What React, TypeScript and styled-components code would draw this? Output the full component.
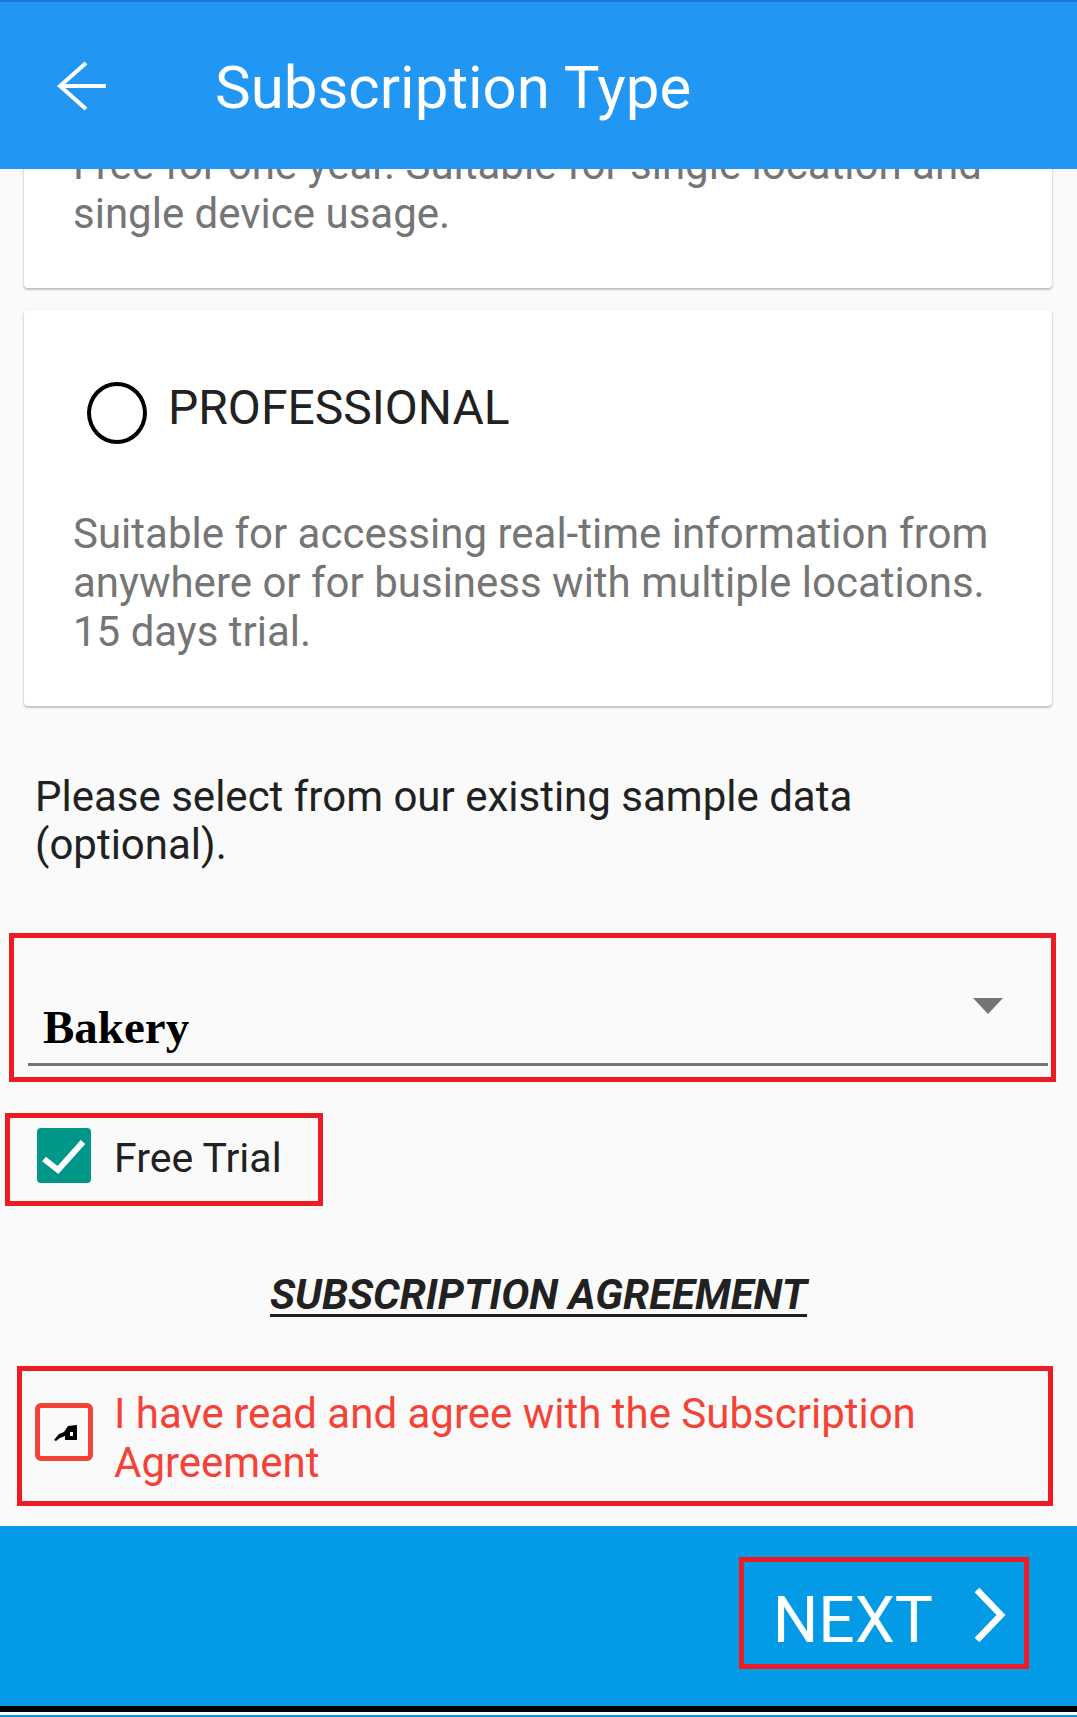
import { createGlobalStyle, styled } from "styled-components";

const GlobalStyle = createGlobalStyle`
  html, body {
    margin: 0;
    padding: 0;
    background: #fafafa;
  }
  body {
    font-family: Roboto, "Noto Sans", Arial, sans-serif;
  }
`;

// the first plan is scrolled up under the app bar, only its text tail shows
const plans: { title?: string; text: string }[] = [
  {
    text: "Free for one year. Suitable for single location and single device usage.",
  },
  {
    title: "PROFESSIONAL",
    text: "Suitable for accessing real-time information from anywhere or for business with multiple locations. 15 days trial.",
  },
];

const App = () => {
  return (
    <Page>
      <GlobalStyle />
      <Header>
        <BackButton>
          <svg width="50" height="50" viewBox="0 0 50 50">
            <path
              d="M29 2 L3 25 L29 48 M3 25 H49"
              fill="none"
              stroke="#fff"
              strokeWidth="4"
              strokeLinejoin="miter"
            />
          </svg>
        </BackButton>
        <Title>Subscription Type</Title>
      </Header>

      <Viewport>
        <Scroller>
          {plans.map((p, i) => (
            <Card key={i} $first={i === 0}>
              {p.title && (
                <PlanRow>
                  <Radio />
                  <PlanName>{p.title}</PlanName>
                </PlanRow>
              )}
              <PlanText $spaced={!!p.title}>{p.text}</PlanText>
            </Card>
          ))}

          <Prompt>Please select from our existing sample data (optional).</Prompt>

          <DropdownMark>
            <Field>
              <FieldValue>Bakery</FieldValue>
              <Caret>
                <svg width="30" height="16" viewBox="0 0 30 16">
                  <path d="M0 0 H30 L15 16 Z" fill="#757575" />
                </svg>
              </Caret>
            </Field>
          </DropdownMark>

          <TrialMark>
            <CheckBox>
              <svg width="54" height="55" viewBox="0 0 54 55">
                <path
                  d="M7 31 L21 42 L46 14"
                  fill="none"
                  stroke="#fff"
                  strokeWidth="6"
                />
              </svg>
            </CheckBox>
            <TrialLabel>Free Trial</TrialLabel>
          </TrialMark>

          <AgreementTitle>SUBSCRIPTION AGREEMENT</AgreementTitle>

          <AgreeMark>
            <OutlineBox>
              <svg width="48" height="48" viewBox="0 0 48 48">
                <path
                  d="M14 32 L19 26 L24 24 L28 18 L37 17 L37 32 L25 32 L25 28 L20 30 L16 33 Z"
                  fill="#000"
                />
                <rect x="30" y="24" width="3" height="4" fill="#fff" />
              </svg>
            </OutlineBox>
            <AgreeText>I have read and agree with the Subscription Agreement</AgreeText>
          </AgreeMark>
        </Scroller>
      </Viewport>

      <BottomBar>
        <NextMark>
          <NextLabel>NEXT</NextLabel>
          <Chevron>
            <svg width="34" height="54" viewBox="0 0 34 54">
              <path
                d="M5 2 L29 27 L5 52"
                fill="none"
                stroke="#fff"
                strokeWidth="6.5"
              />
            </svg>
          </Chevron>
        </NextMark>
      </BottomBar>
      <BlackEdge />
      <WhiteEdge />
      <NextScreenEdge />
    </Page>
  );
};

export default App;

const Page = styled.div`
  width: 1077px;
  height: 1717px;
  overflow: hidden;
  display: flex;
  flex-direction: column;
  background: #fafafa;
`;

const Header = styled.header`
  flex: none;
  box-sizing: border-box;
  height: 169px;
  border-top: 2px solid #1976d2;
  background: #2196f3;
  display: flex;
  align-items: center;
`;

const BackButton = styled.div`
  width: 50px;
  height: 50px;
  margin-left: 57px;
  display: flex;
`;

const Title = styled.h1`
  margin: 4px 0 0 108px;
  font-size: 60px;
  font-weight: 400;
  line-height: 72px;
  color: #fff;
`;

const Viewport = styled.div`
  flex: none;
  height: 1357px;
  overflow: hidden;
`;

const Scroller = styled.div`
  display: flex;
  flex-direction: column;
`;

const Card = styled.div<{ $first?: boolean }>`
  margin: ${(p) => (p.$first ? "-99px" : "22px")} 25px 0 24px;
  padding: 70px 49px 50px 49px;
  background: #fff;
  border-radius: 4px;
  box-shadow: 0 1px 3px rgba(0, 0, 0, 0.2), 0 2px 2px rgba(0, 0, 0, 0.12);
`;

const PlanRow = styled.div`
  display: flex;
  align-items: flex-start;
  padding-left: 14px;
`;

const Radio = styled.span`
  box-sizing: border-box;
  width: 60px;
  height: 62px;
  margin-top: 2px;
  border: 4px solid #000;
  border-radius: 50%;
`;

const PlanName = styled.div`
  margin-left: 21px;
  font-size: 48px;
  line-height: 56px;
  color: #212121;
`;

const PlanText = styled.p<{ $spaced?: boolean }>`
  margin: ${(p) => (p.$spaced ? "65px" : "0")} 0 0;
  font-size: 42px;
  line-height: 49px;
  color: #757575;
`;

const Prompt = styled.p`
  margin: 67px 0 0;
  padding: 0 35px;
  font-size: 42px;
  line-height: 48px;
  color: #212121;
`;

const Mark = styled.div`
  box-sizing: border-box;
  border: 5px solid #ed1c24;
`;

const DropdownMark = styled(Mark)`
  margin: 64px 21px 0 9px;
  padding-bottom: 11px;
`;

const Field = styled.div`
  margin: 0 3px 0 14px;
  padding: 62px 45px 9px 15px;
  border-bottom: 3px solid #757575;
  display: flex;
  align-items: flex-start;
`;

const FieldValue = styled.div`
  flex: 1;
  font-family: "Liberation Serif", "Times New Roman", serif;
  font-weight: 700;
  font-size: 47px;
  line-height: 54px;
  color: #000;
`;

const Caret = styled.div`
  margin-top: -2px;
  display: flex;
`;

const TrialMark = styled(Mark)`
  align-self: flex-start;
  margin: 31px 0 0 5px;
  padding: 10px 36px 18px 27px;
  display: flex;
  align-items: center;
`;

const CheckBox = styled.span`
  width: 54px;
  height: 55px;
  border-radius: 4px;
  background: #009688;
  display: flex;
`;

const TrialLabel = styled.span`
  margin: 4px 0 0 23px;
  font-size: 41px;
  line-height: 48px;
  color: #212121;
`;

const AgreementTitle = styled.div`
  margin-top: 65px;
  text-align: center;
  font-size: 42px;
  line-height: 48px;
  font-weight: 700;
  font-style: italic;
  color: #212121;
  text-decoration: underline;
  text-decoration-thickness: 3px;
  text-underline-offset: 5px;
`;

const AgreeMark = styled(Mark)`
  margin: 47px 24px 0 17px;
  padding: 18px 18px 14px 13px;
  display: flex;
  align-items: flex-start;
`;

const OutlineBox = styled.span`
  flex: none;
  width: 58px;
  height: 58px;
  margin-top: 14px;
  box-sizing: border-box;
  border: 5px solid #f44336;
  border-radius: 6px;
  display: flex;
`;

const AgreeText = styled.span`
  margin-left: 21px;
  font-size: 42px;
  line-height: 49px;
  color: #f44336;
`;

const BottomBar = styled.footer`
  flex: none;
  box-sizing: border-box;
  height: 180px;
  padding: 31px 48px 0 0;
  background: #039be5;
  display: flex;
  justify-content: flex-end;
  align-items: flex-start;
`;

const NextMark = styled(Mark)`
  height: 112px;
  padding: 21px 18px 0 29px;
  display: flex;
  align-items: flex-start;
`;

const NextLabel = styled.span`
  font-size: 64px;
  line-height: 75px;
  color: #fff;
`;

const Chevron = styled.span`
  margin: 5px 0 0 39px;
  display: flex;
`;

const BlackEdge = styled.div`
  flex: none;
  height: 6px;
  background: #000;
`;

const WhiteEdge = styled.div`
  flex: none;
  height: 3px;
  background: #fff;
`;

const NextScreenEdge = styled.div`
  flex: 1;
  background: #039be5;
`;
